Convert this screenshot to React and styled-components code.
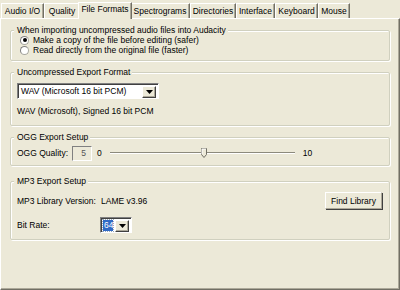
import React from 'react';
import styled, { createGlobalStyle } from 'styled-components';

const Global = createGlobalStyle`
  html, body { margin: 0; padding: 0; background: #ece9d8; }
  body {
    font-family: "Liberation Sans", Arial, sans-serif;
    font-size: 8.5px;
    color: #000;
  }
`;

const Window = styled.div`
  width: 400px;
  height: 290px;
  display: flex;
  flex-direction: column;
  background: #ece9d8;
  overflow: hidden;
`;

const TabStrip = styled.div`
  display: flex;
  align-items: flex-end;
  height: 18px;
  padding-left: 1px;
`;

const Tab = styled.div`
  width: ${(p) => p.w + (p.active ? 4 : 0)}px;
  height: ${(p) => (p.active ? '17px' : '15px')};
  line-height: ${(p) => (p.active ? '13px' : '14px')};
  margin: ${(p) => (p.active ? '0 -2px -1px' : '0')};
  position: relative;
  z-index: ${(p) => (p.active ? 1 : 0)};
  background: #ece9d8;
  border-top: 1px solid #fff;
  border-left: 1px solid #fff;
  border-right: 1px solid #716f64;
  box-shadow: inset -1px 0 0 #aca899;
  box-sizing: border-box;
  text-align: center;
  white-space: nowrap;
`;

const Panel = styled.div`
  flex: 1;
  border-top: 1px solid #fff;
  border-left: 1px solid #fff;
  border-right: 1px solid #716f64;
  border-bottom: 1px solid #716f64;
  box-shadow: inset -1px -1px 0 #aca899;
  padding: 6px 9px 0 9px;
  display: flex;
  flex-direction: column;
`;

const Group = styled.fieldset`
  margin: ${(p) => p.mt || 0}px 0 0;
  border: 1px solid #d0d0bf;
  border-radius: 2px;
  box-shadow: 1px 1px 0 #fff, inset 1px 1px 0 #fff;
  padding: 0 6px ${(p) => p.pb || 4}px 6px;
  min-width: 0;
`;

const Legend = styled.legend`
  padding: 0 2px 0 3px;
  margin-left: -3px;
  line-height: 10px;
  background: #ece9d8;
  position: relative;
  z-index: 1;
`;

const Radio = styled.label`
  display: flex;
  align-items: center;
  height: 10px;
  gap: 4px;
  padding-left: 3px;
  white-space: nowrap;
`;

const RadioDot = styled.span`
  width: 9px;
  height: 9px;
  border-radius: 50%;
  box-sizing: border-box;
  border: 1px solid #a8a8a0;
  border-top-color: #808080;
  border-left-color: #808080;
  background: #fff;
  display: flex;
  align-items: center;
  justify-content: center;
  &::after {
    content: '';
    width: 4px;
    height: 4px;
    border-radius: 50%;
    background: ${(p) => (p.checked ? '#000' : 'transparent')};
  }
`;

const Combo = styled.div`
  width: ${(p) => p.w}px;
  height: 16px;
  box-sizing: border-box;
  border: 1px solid #fff;
  border-top-color: #808080;
  border-left-color: #808080;
  box-shadow: inset 1px 1px 0 #404040;
  background: #fff;
  display: flex;
  align-items: center;
  padding: 2px 2px 1px 2px;
  margin-top: ${(p) => p.mt || 0}px;
`;

const ComboText = styled.span`
  flex: 1;
  height: 11px;
  line-height: 11px;
  padding-left: 1px;
  background: ${(p) => (p.selected ? '#316ac5' : 'transparent')};
  color: ${(p) => (p.selected ? '#fff' : '#000')};
  outline: ${(p) => (p.selected ? '1px dotted #9ab' : 'none')};
  margin-right: 2px;
  white-space: nowrap;
`;

const ComboButton = styled.span`
  width: 14px;
  height: 12px;
  box-sizing: border-box;
  background: #ece9d8;
  border-top: 1px solid #fff;
  border-left: 1px solid #fff;
  border-right: 1px solid #404040;
  border-bottom: 1px solid #404040;
  box-shadow: inset -1px -1px 0 #aca899;
  display: flex;
  align-items: center;
  justify-content: center;
`;

const Arrow = () => (
  <svg width="7" height="4" viewBox="0 0 7 4">
    <path d="M0 0h7L3.5 4z" fill="#000" />
  </svg>
);

const Row = styled.div`
  display: flex;
  align-items: center;
  height: ${(p) => p.h || 10}px;
  margin-top: ${(p) => p.mt || 0}px;
  white-space: nowrap;
`;

const Label = styled.span`
  width: ${(p) => (p.w ? `${p.w}px` : 'auto')};
  margin-left: ${(p) => p.ml || 0}px;
  flex-shrink: 0;
`;

const ValueBox = styled.span`
  width: 20px;
  height: 15px;
  box-sizing: border-box;
  border: 1px solid #808080;
  border-right-color: #fff;
  border-bottom-color: #fff;
  text-align: right;
  padding-right: 5px;
  line-height: 13px;
  color: #555;
`;

const Slider = styled.div`
  position: relative;
  width: 185px;
  height: 16px;
  margin: 0 8px;
  flex-shrink: 0;
  &::before {
    content: '';
    position: absolute;
    left: 0;
    right: 0;
    top: 7px;
    height: 2px;
    border-top: 1px solid #8c8a7c;
    border-bottom: 1px solid #fff;
    box-sizing: border-box;
  }
`;

const Thumb = styled.svg`
  position: absolute;
  top: 3px;
`;

const Button = styled.button`
  margin-left: auto;
  width: 57px;
  height: 17px;
  padding: 0;
  font: inherit;
  color: #000;
  background: #ece9d8;
  border: 1px solid #fff;
  border-right-color: #aca899;
  border-bottom-color: #aca899;
  box-shadow: 1px 1px 0 #404040;
  margin-right: 1px;
`;

const tabs = [
  ['Audio I/O', 43],
  ['Quality', 36],
  ['File Formats', 50],
  ['Spectrograms', 60],
  ['Directories', 46],
  ['Interface', 39],
  ['Keyboard', 43],
  ['Mouse', 32],
];

export default function App() {
  const quality = 5;
  return (
    <Window>
      <Global />
      <TabStrip>
        {tabs.map(([t, w]) => (
          <Tab key={t} w={w} active={t === 'File Formats'}>{t}</Tab>
        ))}
      </TabStrip>
      <Panel>
        <Group pb={5}>
          <Legend>When importing uncompressed audio files into Audacity</Legend>
          <Radio><RadioDot checked />Make a copy of the file before editing (safer)</Radio>
          <Radio><RadioDot />Read directly from the original file (faster)</Radio>
        </Group>

        <Group mt={6} pb={9}>
          <Legend>Uncompressed Export Format</Legend>
          <Combo w={142} mt={6}>
            <ComboText>WAV (Microsoft 16 bit PCM)</ComboText>
            <ComboButton><Arrow /></ComboButton>
          </Combo>
          <Row mt={7}>WAV (Microsoft), Signed 16 bit PCM</Row>
        </Group>

        <Group mt={6} pb={4}>
          <Legend>OGG Export Setup</Legend>
          <Row h={16} mt={3}>
            <Label w={55}>OGG Quality:</Label>
            <ValueBox>{quality}</ValueBox>
            <Label ml={5}>0</Label>
            <Slider>
              <Thumb width="6" height="10" viewBox="0 0 6 10" style={{ left: `${3 + (quality / 10) * 176}px` }}>
                <path d="M0.5 0.5h5v6l-2.5 3l-2.5-3z" fill="#ece9d8" stroke="#716f64" />
                <path d="M1 1h4M1 1v5" stroke="#fff" />
              </Thumb>
            </Slider>
            <Label>10</Label>
          </Row>
        </Group>

        <Group mt={10} pb={6}>
          <Legend>MP3 Export Setup</Legend>
          <Row h={17} mt={6}>
            <Label w={84}>MP3 Library Version:</Label>
            <Label>LAME v3.96</Label>
            <Button>Find Library</Button>
          </Row>
          <Row h={16} mt={8}>
            <Label w={83}>Bit Rate:</Label>
            <Combo w={32}>
              <ComboText selected>64</ComboText>
              <ComboButton><Arrow /></ComboButton>
            </Combo>
          </Row>
        </Group>
      </Panel>
    </Window>
  );
}
